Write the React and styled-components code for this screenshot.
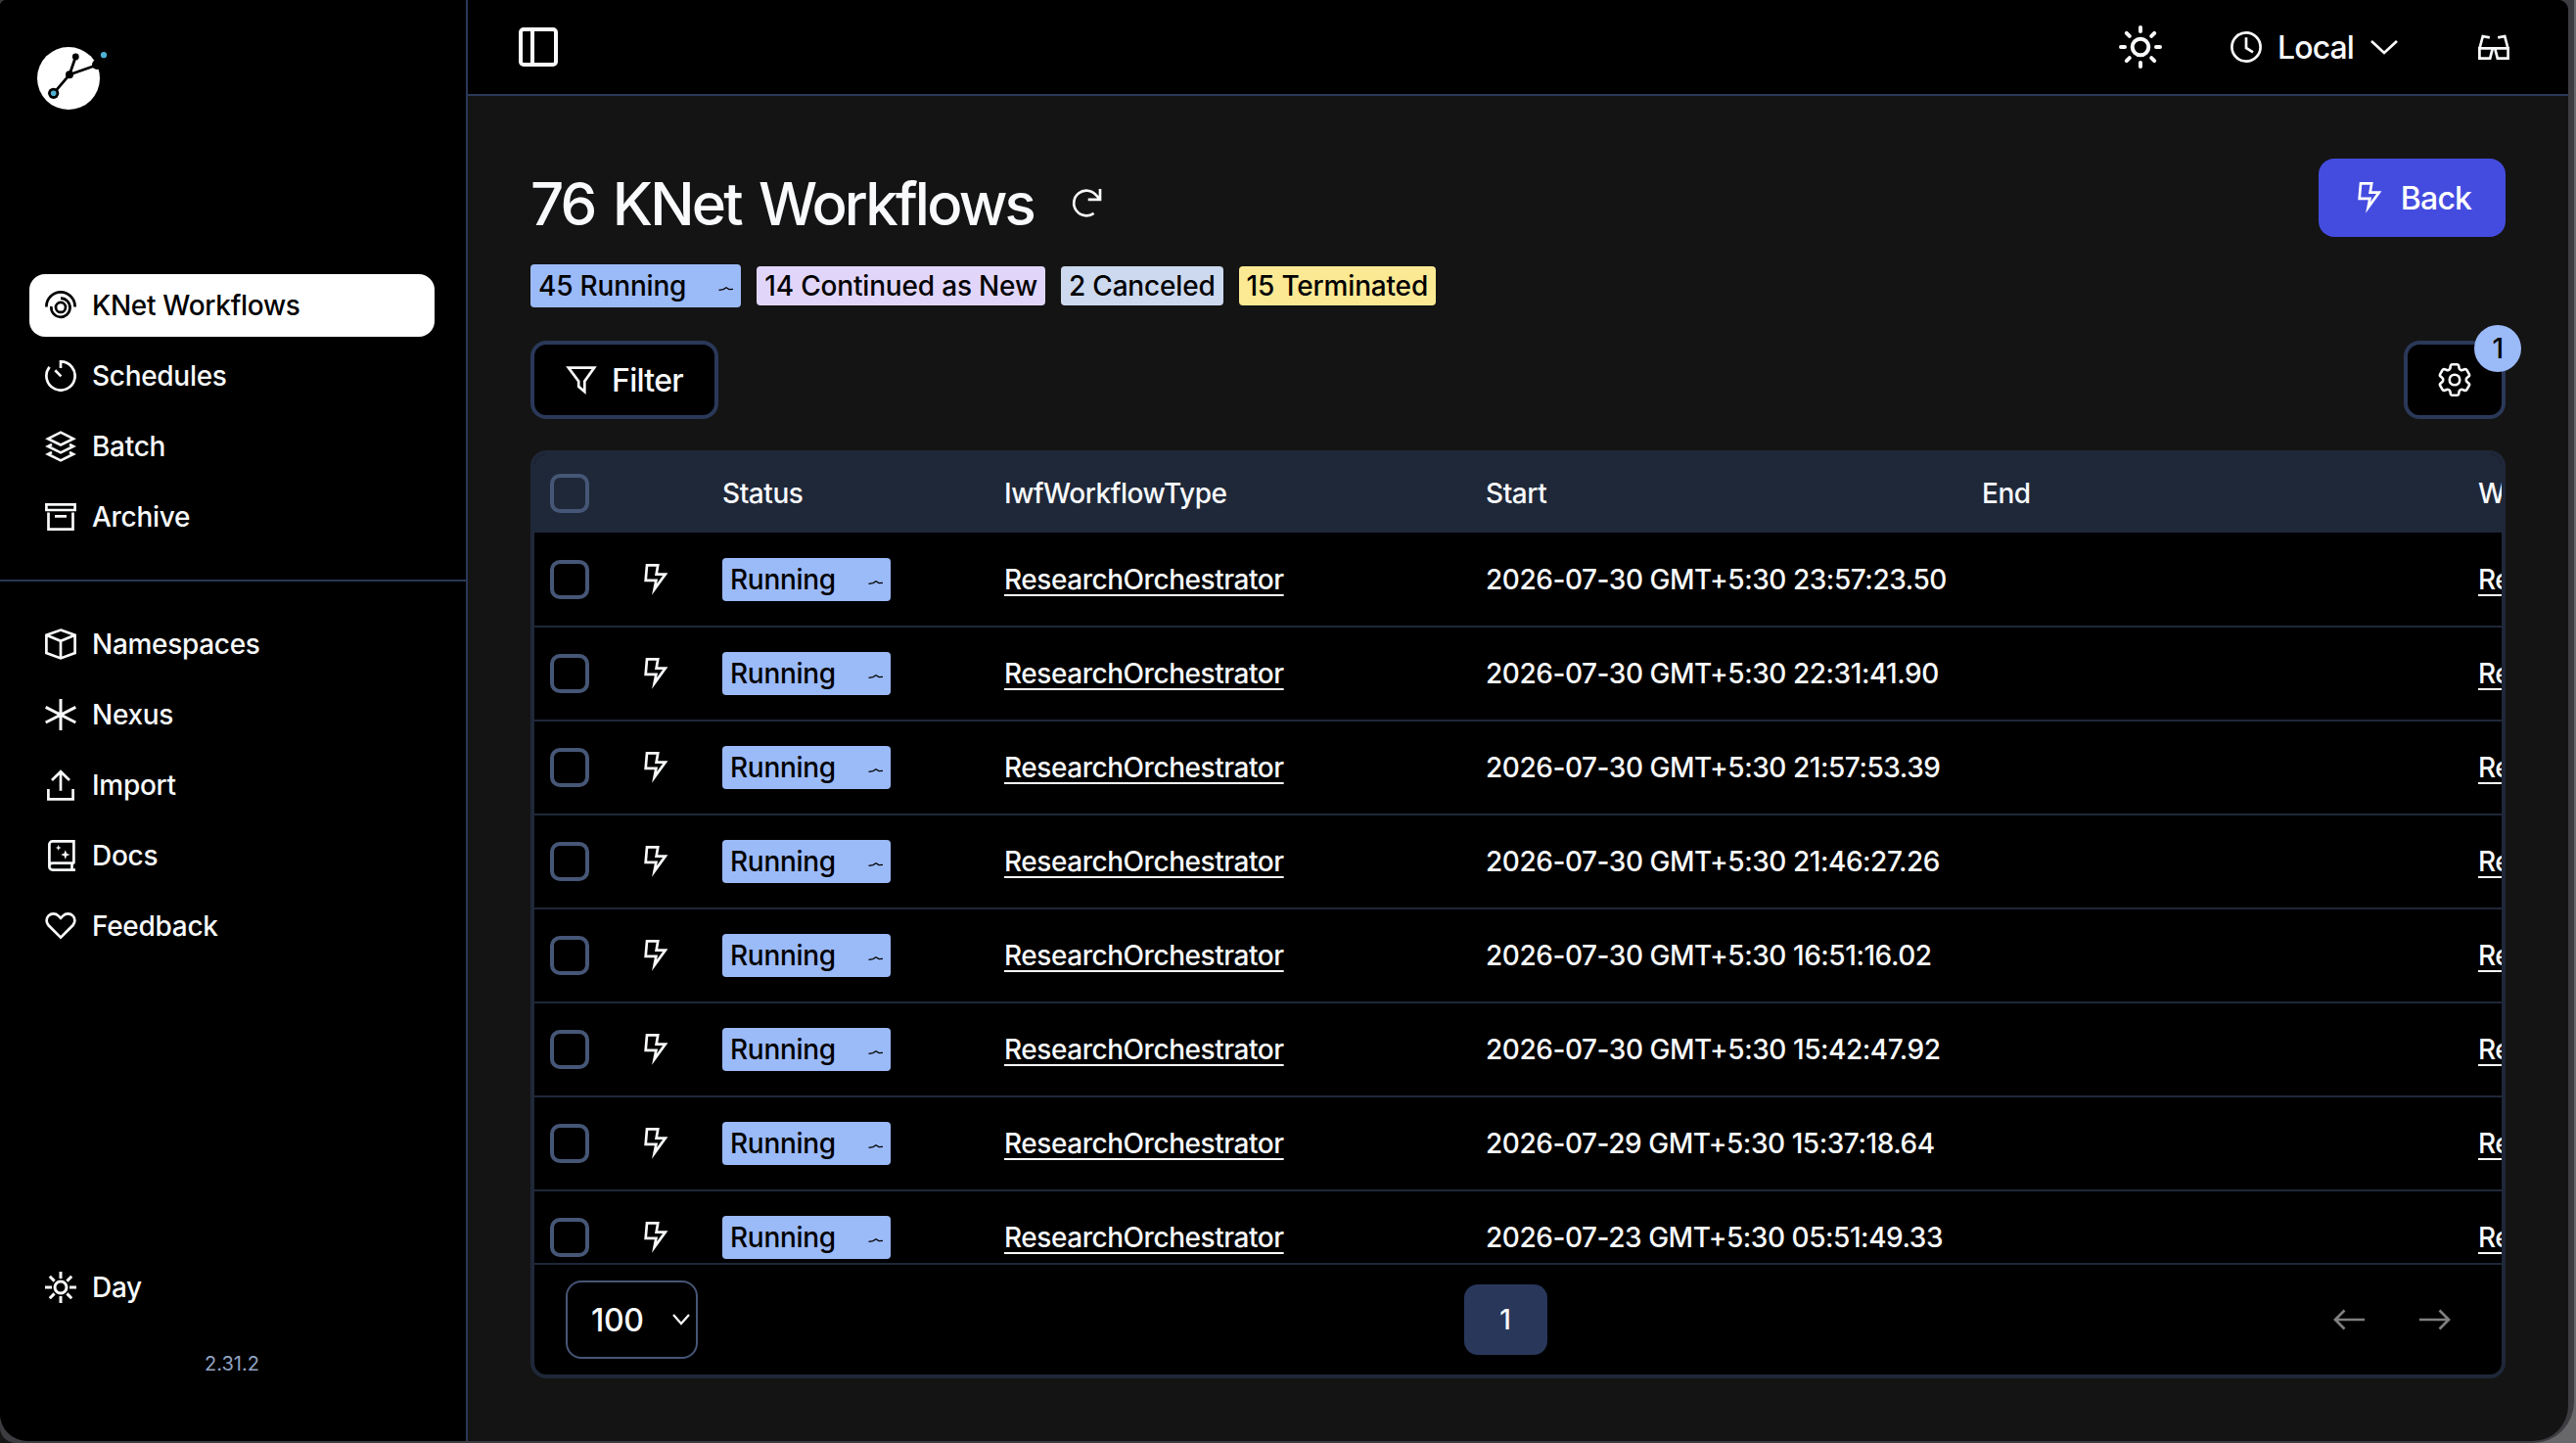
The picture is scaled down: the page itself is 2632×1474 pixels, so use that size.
import React from "react";
import styled, { createGlobalStyle } from "styled-components";
import { HiOutlineCog6Tooth } from "react-icons/hi2";

const GlobalStyle = createGlobalStyle`
  * {
    box-sizing: border-box;
  }
  body {
    margin: 0;
    background: linear-gradient(90deg, #161616 50%, #68686b 50%);
    color: #f8fafc;
    font-family: Inter, "Liberation Sans", sans-serif;
    font-size: 28px;
    font-weight: 500;
    letter-spacing: -0.3px;
  }
  button {
    font: inherit;
    letter-spacing: inherit;
    color: inherit;
    border: none;
    background: none;
    padding: 0;
  }
`;

const Frame = styled.div`
  width: 2630px;
  height: 1474px;
  padding: 0 6px 2px 0;
  background: #3d3c41;
  border-radius: 0 0 42px 16px;
  overflow: hidden;
`;

const Page = styled.div`
  display: flex;
  height: 1472px;
  background: #141414;
  border-radius: 6px 10px 36px 28px;
  overflow: hidden;
`;

const Sidebar = styled.aside`
  display: flex;
  flex-direction: column;
  width: 478px;
  flex-shrink: 0;
  background: #000;
  border-right: 2px solid #2a3859;
`;

const LogoBox = styled.div`
  height: 280px;
  padding: 48px 0 0 38px;
`;

const NavGroup = styled.nav`
  display: flex;
  flex-direction: column;
  gap: 8px;
  padding: 0 32px 0 30px;
`;

const NavItem = styled.a`
  display: flex;
  align-items: center;
  gap: 16px;
  height: 64px;
  padding: 0 16px;
  border-radius: 16px;
  color: ${(props) => (props.$active ? "#000" : "#f8fafc")};
  background: ${(props) => (props.$active ? "#fff" : "transparent")};
`;

const Divider = styled.div`
  height: 2px;
  margin: 32px 0;
  background: #2a3859;
`;

const SidebarFooter = styled.div`
  margin-top: auto;
  height: 189px;
`;

const Version = styled.div`
  margin-top: 34px;
  padding-right: 2px;
  text-align: center;
  font-size: 20px;
  font-weight: 400;
  line-height: 24px;
  letter-spacing: 0;
  color: #92a4c3;
`;

const Main = styled.main`
  flex: 1;
  min-width: 0;
  display: flex;
  flex-direction: column;
`;

const TopBar = styled.header`
  display: flex;
  align-items: center;
  height: 98px;
  padding: 0 60px 0 52px;
  background: #000;
  border-bottom: 2px solid #2a3859;
`;

const TopActions = styled.div`
  display: flex;
  align-items: center;
  margin-left: auto;
`;

const TimeButton = styled.button`
  display: flex;
  align-items: center;
  margin: 0 82px 0 70px;
  font-size: 32px;
  font-weight: 450;
  letter-spacing: -0.9px;

  span {
    margin: 1px 17px 0 16px;
  }
`;

const Content = styled.section`
  display: flex;
  flex-direction: column;
  padding: 64px 64px 0;
`;

const TitleRow = styled.div`
  display: flex;
  align-items: flex-start;
  justify-content: space-between;
  height: 108px;
`;

const Title = styled.h1`
  display: flex;
  align-items: center;
  gap: 38px;
  margin: 10px 0 0;
  font-size: 60px;
  font-weight: 550;
  line-height: 72px;
  letter-spacing: -2.8px;
  word-spacing: 5px;

  svg {
    margin-bottom: 3px;
  }
`;

const BackButton = styled.button`
  display: flex;
  align-items: center;
  justify-content: center;
  gap: 19px;
  width: 191px;
  height: 80px;
  padding-left: 5px;
  border-radius: 16px;
  background: #444ce0;
  color: #fff;
  font-size: 32px;
  letter-spacing: -0.8px;
`;

const Counts = styled.div`
  display: flex;
  align-items: center;
  gap: 16px;
  height: 44px;
  letter-spacing: -0.18px;
`;

const tagColors = {
  running: "#9bbaf8",
  continued: "#e1d6fa",
  canceled: "#ccd9ef",
  terminated: "#fbe994",
};

const Tag = styled.span`
  display: inline-flex;
  align-items: center;
  height: ${(props) => (props.$status === "running" ? 44 : 40)}px;
  padding: 0 8px;
  border-radius: 4px;
  background: ${(props) => tagColors[props.$status]};
  color: #000;
  white-space: nowrap;

  svg {
    margin: 6px 0 0 33px;
  }
`;

const Toolbar = styled.div`
  display: flex;
  justify-content: space-between;
  margin: 34px 0 32px;
`;

const OutlineButton = styled.button`
  position: relative;
  display: flex;
  align-items: center;
  justify-content: center;
  gap: 15px;
  width: ${(props) => props.$width}px;
  height: 80px;
  border: 4px solid #2a3859;
  border-radius: 16px;
  background: #000;
  font-size: 32px;
  font-weight: 450;
  letter-spacing: -0.7px;
`;

const Bubble = styled.span`
  position: absolute;
  top: -20px;
  right: -20px;
  width: 48px;
  height: 48px;
  border-radius: 50%;
  background: #9bbaf8;
  color: #000;
  font-size: 28px;
  font-weight: 500;
  line-height: 48px;
  text-align: center;
`;

const TableCard = styled.div`
  display: flex;
  flex-direction: column;
  width: 2018px;
  height: 948px;
  border: 4px solid #1f2839;
  border-radius: 16px;
  background: #000;
  overflow: hidden;
`;

const TableRow = styled.div`
  display: grid;
  grid-template-columns: 96px 80px 288px 492px 507px 507px 200px;
  align-items: center;
  height: 96px;
  padding-left: 16px;
  border-bottom: 2px solid #1f2839;
  font-weight: 450;
  letter-spacing: -0.45px;
  white-space: nowrap;
`;

const HeadRow = styled(TableRow)`
  height: 80px;
  flex-shrink: 0;
  border-bottom: none;
  background: #1f2839;
  font-weight: 500;
`;

const Rows = styled.div`
  flex: 1;
  min-height: 0;
  padding-top: 1px;
  overflow: hidden;
`;

const Checkbox = styled.span`
  width: 40px;
  height: 40px;
  border: 4px solid #465676;
  border-radius: 10px;
`;

const StatusCell = styled.div`
  display: flex;
  font-weight: 500;
  letter-spacing: -0.3px;
`;

const WorkflowLink = styled.a`
  text-decoration: underline;
  text-decoration-thickness: 2px;
  text-underline-offset: 5px;
`;

const Pagination = styled.div`
  display: grid;
  grid-template-columns: 1fr auto 1fr;
  align-items: center;
  height: 114px;
  flex-shrink: 0;
  padding: 0 58px 0 32px;
  border-top: 2px solid #1f2839;
`;

const PageSize = styled.div`
  display: flex;
  align-items: center;
  justify-content: space-between;
  width: 135px;
  height: 80px;
  padding: 0 6px 0 24px;
  border: 2px solid #465676;
  border-radius: 16px;
  font-size: 32px;
  font-weight: 450;
`;

const PageNumber = styled.button`
  width: 85px;
  height: 72px;
  border-radius: 14px;
  background: #29375b;
`;

const PageArrows = styled.div`
  display: flex;
  justify-content: flex-end;
  gap: 56px;
  margin-right: -6px;
  color: #7f7f7f;
`;

const Icon = ({ w = 32, h = 32, sw = 2.7, children }) => (
  <svg width={w} height={h} viewBox={`0 0 ${w} ${h}`} fill="none" stroke="currentColor" strokeWidth={sw} strokeMiterlimit="10">
    {children}
  </svg>
);

const WorkflowIcon = () => (
  <Icon>
    <path d="M1.4 17.5V17A14.6 14.6 0 0 1 30.6 17V17.5" />
    <path d="M6.4 17A9.6 9.6 0 1 0 16 8.6" />
    <circle cx="16" cy="17.9" r="5" />
  </Icon>
);

const ScheduleIcon = () => (
  <Icon>
    <path d="M16 8V1.4A14.6 14.6 0 1 1 4.6 6.9M10.3 10.3L16.4 16.4" />
  </Icon>
);

const BatchIcon = () => (
  <Icon sw={2.6}>
    <path d="M16 1.6L29 8.2L16 14.5L3 8.2Z" />
    <path d="M7 14L3 16L16 22.4L29 16L25 14" />
    <path d="M7 22L3 24L16 30.4L29 24L25 22" />
  </Icon>
);

const ArchiveIcon = () => (
  <Icon>
    <path d="M1.4 3.4H30.6V9H1.4ZM3.5 11.5V28.6H28.5V11.5M10 15.4H22" />
  </Icon>
);

const NamespaceIcon = () => (
  <Icon>
    <path d="M16 1.6L30.6 6.8V25L16 30.4L1.4 25V6.8ZM1.4 6.8L16 12.8L30.6 6.8M16 12.8V30.4" />
  </Icon>
);

const NexusIcon = () => (
  <Icon sw={3}>
    <path d="M16 0V32M0.7 8.3L31.3 24M31.3 8.3L0.7 24" />
  </Icon>
);

const ImportIcon = () => (
  <Icon>
    <path d="M3.4 20V30.4H28.6V20M16 2V21.7M7 11L16 2.2L25 11" />
  </Icon>
);

const DocsIcon = () => (
  <Icon>
    <path d="M29.4 24V1.4H7.6A3.2 3.2 0 0 0 4.4 4.6V27A3.4 3.4 0 0 0 7.8 30.6H31M4.4 27A3.2 3.2 0 0 1 7.6 23.7H30M27.5 24V30" />
    <path
      d="M13.7 5L14.5 7.2L16.7 8L14.5 8.8L13.7 11L12.9 8.8L10.7 8L12.9 7.2ZM20.8 10.3L22.1 13.7L25.5 15L22.1 16.3L20.8 19.7L19.5 16.3L16.1 15L19.5 13.7Z"
      fill="currentColor"
      stroke="none"
    />
  </Icon>
);

const HeartIcon = () => (
  <Icon>
    <path d="M16 27.6L3.6 15.2A7 7 0 0 1 3.6 5.4A7 7 0 0 1 13.5 5.4L16 7.9L18.5 5.4A7 7 0 0 1 28.4 5.4A7 7 0 0 1 28.4 15.2Z" />
  </Icon>
);

const DayIcon = () => (
  <Icon sw={3}>
    <circle cx="16" cy="16" r="6" />
    <path d="M16 0V7M16 25V32M0 16H7M25 16H32M4.8 4.8L9.6 9.6M22.4 22.4L27.2 27.2M27.2 4.8L22.4 9.6M9.6 22.4L4.8 27.2" />
  </Icon>
);

const SunIcon = () => (
  <Icon w={44} h={44} sw={4}>
    <circle cx="22" cy="22" r="8.3" />
    <path
      strokeLinecap="round"
      d="M22 2V6M22 38V42M2 22H6M38 22H42M7.8 7.8L10.8 10.8M33.2 33.2L36.2 36.2M36.2 7.8L33.2 10.8M10.8 33.2L7.8 36.2"
    />
  </Icon>
);

const PanelIcon = () => (
  <Icon w={40} h={40} sw={4}>
    <rect x="2" y="2" width="36" height="36" rx="3" />
    <path d="M14 2V38" />
  </Icon>
);

const ClockIcon = () => (
  <Icon>
    <circle cx="16" cy="16" r="14.6" />
    <path d="M16 6.3V17L23 21.3" />
  </Icon>
);

const GlassesIcon = () => (
  <Icon w={32} h={26}>
    <path d="M1.4 14V24.6H12.2L14.8 14.4H17.2L19.8 24.6H30.6V14M0 14.4H32M1.6 14L4.8 2L11.8 3.4M30.4 14L27.2 2L20.2 3.4" />
  </Icon>
);

const BoltIcon = () => (
  <Icon w={25} h={32}>
    <path d="M3 1.4H14.2L12.6 10.6H21.8L10.6 26L12.4 16.8H1.7Z" />
  </Icon>
);

const RefreshIcon = () => (
  <Icon>
    <path d="M23.6 26.8A12.8 12.8 0 1 1 25.8 8.2L30 12.6M30 2V12.9H17.7" />
  </Icon>
);

const FilterIcon = () => (
  <Icon>
    <path d="M2.8 3.6H29.2L19.3 17.5V28L13.2 22.8V17.5Z" />
  </Icon>
);

const Chevron = ({ w = 28, h = 15, sw = 2.7 }) => (
  <Icon w={w} h={h} sw={sw}>
    <path d={`M1 1L${w / 2} ${h - 2}L${w - 1} 1`} />
  </Icon>
);

const PulseIcon = () => (
  <Icon w={15} h={6} sw={1.2}>
    <path d="M0.5 4.3L5 3.6L8 1.8L11 3.6L15 3.4" />
  </Icon>
);

const ArrowIcon = ({ flip }) => (
  <Icon>
    <path d={flip ? "M30 16H0M20.5 6.5L30 16L20.5 25.5" : "M2 16H32M11.5 6.5L2 16L11.5 25.5"} />
  </Icon>
);

const Logo = () => (
  <svg width="72" height="64" viewBox="0 0 72 64">
    <circle cx="32" cy="32" r="32" fill="#fff" />
    <path d="M16.7 47.3L33 28.3L39.3 10M33 28.3L60 18.7" stroke="#000" strokeWidth="2.8" fill="none" />
    <circle cx="16.7" cy="47.3" r="5.6" />
    <circle cx="33" cy="28.3" r="4" />
    <circle cx="39.3" cy="10" r="3.4" />
    <circle cx="61" cy="18" r="5" />
    <circle cx="16.7" cy="47.3" r="2.8" fill="#4fb0d4" />
    <circle cx="68" cy="8.2" r="3.1" fill="#4fb0d4" />
  </svg>
);

const mainLinks = [
  { label: "KNet Workflows", icon: <WorkflowIcon />, active: true },
  { label: "Schedules", icon: <ScheduleIcon /> },
  { label: "Batch", icon: <BatchIcon /> },
  { label: "Archive", icon: <ArchiveIcon /> },
];

const moreLinks = [
  { label: "Namespaces", icon: <NamespaceIcon /> },
  { label: "Nexus", icon: <NexusIcon /> },
  { label: "Import", icon: <ImportIcon /> },
  { label: "Docs", icon: <DocsIcon /> },
  { label: "Feedback", icon: <HeartIcon /> },
];

const workflows = [
  "2026-07-30 GMT+5:30 23:57:23.50",
  "2026-07-30 GMT+5:30 22:31:41.90",
  "2026-07-30 GMT+5:30 21:57:53.39",
  "2026-07-30 GMT+5:30 21:46:27.26",
  "2026-07-30 GMT+5:30 16:51:16.02",
  "2026-07-30 GMT+5:30 15:42:47.92",
  "2026-07-29 GMT+5:30 15:37:18.64",
  "2026-07-23 GMT+5:30 05:51:49.33",
];

const Links = ({ items }) => (
  <NavGroup>
    {items.map((item) => (
      <NavItem key={item.label} $active={item.active}>
        {item.icon}
        {item.label}
      </NavItem>
    ))}
  </NavGroup>
);

const WorkflowRow = ({ start }) => (
  <TableRow>
    <Checkbox />
    <BoltIcon />
    <StatusCell>
      <Tag $status="running">
        Running
        <PulseIcon />
      </Tag>
    </StatusCell>
    <div>
      <WorkflowLink>ResearchOrchestrator</WorkflowLink>
    </div>
    <div>{start}</div>
    <div />
    <div>
      <WorkflowLink>Re</WorkflowLink>
    </div>
  </TableRow>
);

const App = () => {
  return (
    <Frame>
      <GlobalStyle />
      <Page>
        <Sidebar>
          <LogoBox>
            <Logo />
          </LogoBox>
          <Links items={mainLinks} />
          <Divider />
          <Links items={moreLinks} />
          <SidebarFooter>
            <Links items={[{ label: "Day", icon: <DayIcon /> }]} />
            <Version>2.31.2</Version>
          </SidebarFooter>
        </Sidebar>
        <Main>
          <TopBar>
            <PanelIcon />
            <TopActions>
              <SunIcon />
              <TimeButton>
                <ClockIcon />
                <span>Local</span>
                <Chevron />
              </TimeButton>
              <GlassesIcon />
            </TopActions>
          </TopBar>
          <Content>
            <TitleRow>
              <Title>
                76 KNet Workflows
                <RefreshIcon />
              </Title>
              <BackButton>
                <BoltIcon />
                Back
              </BackButton>
            </TitleRow>
            <Counts>
              <Tag $status="running">
                45 Running
                <PulseIcon />
              </Tag>
              <Tag $status="continued">14 Continued as New</Tag>
              <Tag $status="canceled">2 Canceled</Tag>
              <Tag $status="terminated">15 Terminated</Tag>
            </Counts>
            <Toolbar>
              <OutlineButton $width={192}>
                <FilterIcon />
                Filter
              </OutlineButton>
              <OutlineButton $width={104}>
                <HiOutlineCog6Tooth size={42} />
                <Bubble>1</Bubble>
              </OutlineButton>
            </Toolbar>
            <TableCard>
              <HeadRow>
                <Checkbox />
                <div />
                <div>Status</div>
                <div>IwfWorkflowType</div>
                <div>Start</div>
                <div>End</div>
                <div>W</div>
              </HeadRow>
              <Rows>
                {workflows.map((start) => (
                  <WorkflowRow key={start} start={start} />
                ))}
              </Rows>
              <Pagination>
                <PageSize>
                  100
                  <Chevron w={18} h={12} sw={2.2} />
                </PageSize>
                <PageNumber>1</PageNumber>
                <PageArrows>
                  <ArrowIcon />
                  <ArrowIcon flip />
                </PageArrows>
              </Pagination>
            </TableCard>
          </Content>
        </Main>
      </Page>
    </Frame>
  );
};

export default App;
